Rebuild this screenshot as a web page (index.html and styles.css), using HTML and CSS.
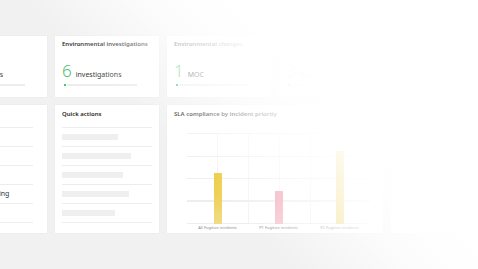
FILE: index.html
```html
<!DOCTYPE html>
<html lang="en">
<head>
<meta charset="utf-8">
<title>Dashboard</title>
<link rel="stylesheet" href="styles.css">
</head>
<body>
<div class="page">
  <div class="grid">
    <div class="card stat">
      <div class="stat-title">Open incidents</div>
      <div class="metric"><span class="metric-num">14</span><span class="metric-label">incidents</span></div>
      <div class="progress"><span class="mark"></span><span class="track"></span></div>
    </div>
    <div class="card stat">
      <div class="stat-title">Environmental investigations</div>
      <div class="metric"><span class="metric-num">6</span><span class="metric-label">investigations</span></div>
      <div class="progress"><span class="mark"></span><span class="track"></span></div>
    </div>
    <div class="card stat">
      <div class="stat-title">Environmental changes</div>
      <div class="metric"><span class="metric-num">1</span><span class="metric-label">MOC</span></div>
      <div class="progress"><span class="mark"></span><span class="track"></span></div>
    </div>
    <div class="card stat">
      <div class="stat-title">Inspections</div>
      <div class="metric"><span class="metric-num">3</span><span class="metric-label">inspections</span></div>
      <div class="progress"><span class="mark"></span><span class="track"></span></div>
    </div>
    <div class="card stat">
      <div class="stat-title">Permits</div>
      <div class="metric"><span class="metric-num">2</span><span class="metric-label">permits</span></div>
      <div class="progress"><span class="mark"></span><span class="track"></span></div>
    </div>

    <div class="card list list-narrow">
      <div class="list-title">Status</div>
      <div class="row"><span class="row-text">Open</span></div>
      <div class="row"><span class="row-text">Closed</span></div>
      <div class="row"><span class="row-text">Draft</span></div>
      <div class="row"><span class="row-text">Under monitoring</span></div>
      <div class="row"><span class="row-text">New</span></div>
    </div>
    <div class="card list">
      <div class="list-title">Quick actions</div>
      <div class="row"><span class="ph" style="width:56px"></span></div>
      <div class="row"><span class="ph" style="width:69px"></span></div>
      <div class="row"><span class="ph" style="width:61px"></span></div>
      <div class="row"><span class="ph" style="width:67px"></span></div>
      <div class="row"><span class="ph" style="width:53px"></span></div>
    </div>
    <div class="card chart">
      <div class="list-title chart-title">SLA compliance by incident priortiy</div>
      <div class="plot">
        <div class="group"><span class="bar yellow" style="height:51px"></span></div>
        <div class="group"><span class="bar pink" style="height:33px"></span></div>
        <div class="group"><span class="bar yellow" style="height:73px"></span></div>
      </div>
      <div class="labels">
        <span>All Fugitive incidents</span>
        <span>P1 Fugitive incidents</span>
        <span>P2 Fugitive incidents</span>
      </div>
    </div>
    <div class="card"></div>
  </div>
  <div class="fade"></div>
</div>
</body>
</html>
```
FILE: styles.css
```css
html, body {
  margin: 0;
  padding: 0;
  overflow: hidden;
}
body {
  background: #f1f1f1;
  font-family: "Noto Sans", "Open Sans", sans-serif;
  color: #2b2b2b;
}
.page {
  position: relative;
  width: 478px;
  height: 269px;
  overflow: hidden;
}
.grid {
  display: grid;
  grid-template-columns: repeat(5, 104px);
  grid-template-rows: 61px 128px;
  gap: 8px;
  margin-left: -57px;
  padding-top: 36px;
}
.card {
  background: #fff;
  box-shadow: 0 0 2px rgba(0, 0, 0, 0.05);
  box-sizing: border-box;
}
.stat {
  padding: 4px 7px 0;
}
.stat-title {
  font-size: 6px;
  line-height: 8px;
  font-weight: 600;
  white-space: nowrap;
  color: #262626;
}
.metric {
  display: flex;
  align-items: baseline;
  gap: 4px;
  margin-top: 14px;
  height: 18px;
}
.metric-num {
  font-size: 17px;
  line-height: 18px;
  font-weight: 300;
  color: #4cc46f;
}
.metric-label {
  font-size: 7px;
  color: #3d3d3d;
  white-space: nowrap;
}
.progress {
  display: flex;
  align-items: center;
  gap: 1px;
  margin-top: 4px;
  height: 2px;
}
.mark {
  width: 2px;
  height: 2px;
  background: #4cc46f;
  margin-left: 2px;
}
.track {
  width: 70px;
  height: 2px;
  background: #ededed;
}
.list {
  padding: 0 7px;
}
.list-narrow {
  padding-right: 14px;
}
.list-title {
  padding: 5px 0 9px;
  font-size: 6px;
  line-height: 8px;
  font-weight: 600;
  color: #262626;
  white-space: nowrap;
}
.row {
  border-top: 1px solid #ededed;
  padding: 6px 0;
  height: 6px;
  display: flex;
  align-items: center;
}
.row:last-child {
  border-bottom: 1px solid #ededed;
}
.row-text {
  font-size: 7px;
  line-height: 6px;
  white-space: nowrap;
  color: #333;
}
.ph {
  display: block;
  height: 6px;
  background: #efefef;
}
.chart {
  grid-column: span 2;
  padding: 0 7px;
}
.chart-title {
  padding-bottom: 0;
}
.plot {
  margin: 15px 0 0 13px;
  width: 183px;
  height: 91px;
  display: flex;
  align-items: flex-end;
  background-image:
    repeating-linear-gradient(to bottom, #eeeeee 0 1px, transparent 1px 22.5px),
    repeating-linear-gradient(to right, transparent 0 30px, #f3f3f3 30px 31px, transparent 31px 30.5px);
}
.group {
  flex: 0 0 61px;
  display: flex;
  justify-content: center;
  align-items: flex-end;
}
.bar {
  display: block;
  width: 8px;
}
.yellow {
  background: linear-gradient(to bottom, #ebc833, #f1dc86);
}
.pink {
  background: linear-gradient(to bottom, #f19db2, #f6c6d2);
}
.labels {
  margin-left: 13px;
  width: 183px;
  display: flex;
  margin-top: 1px;
}
.labels span {
  flex: 0 0 61px;
  text-align: center;
  font-size: 4px;
  line-height: 6px;
  color: #8d8d8d;
  white-space: nowrap;
}
.fade {
  position: absolute;
  inset: 0;
  pointer-events: none;
  background: linear-gradient(45deg,
    rgba(255, 255, 255, 0) 205px,
    rgba(255, 255, 255, 0.4) 250px,
    rgba(255, 255, 255, 0.75) 290px,
    rgba(255, 255, 255, 0.92) 325px,
    #fff 360px);
}
```
